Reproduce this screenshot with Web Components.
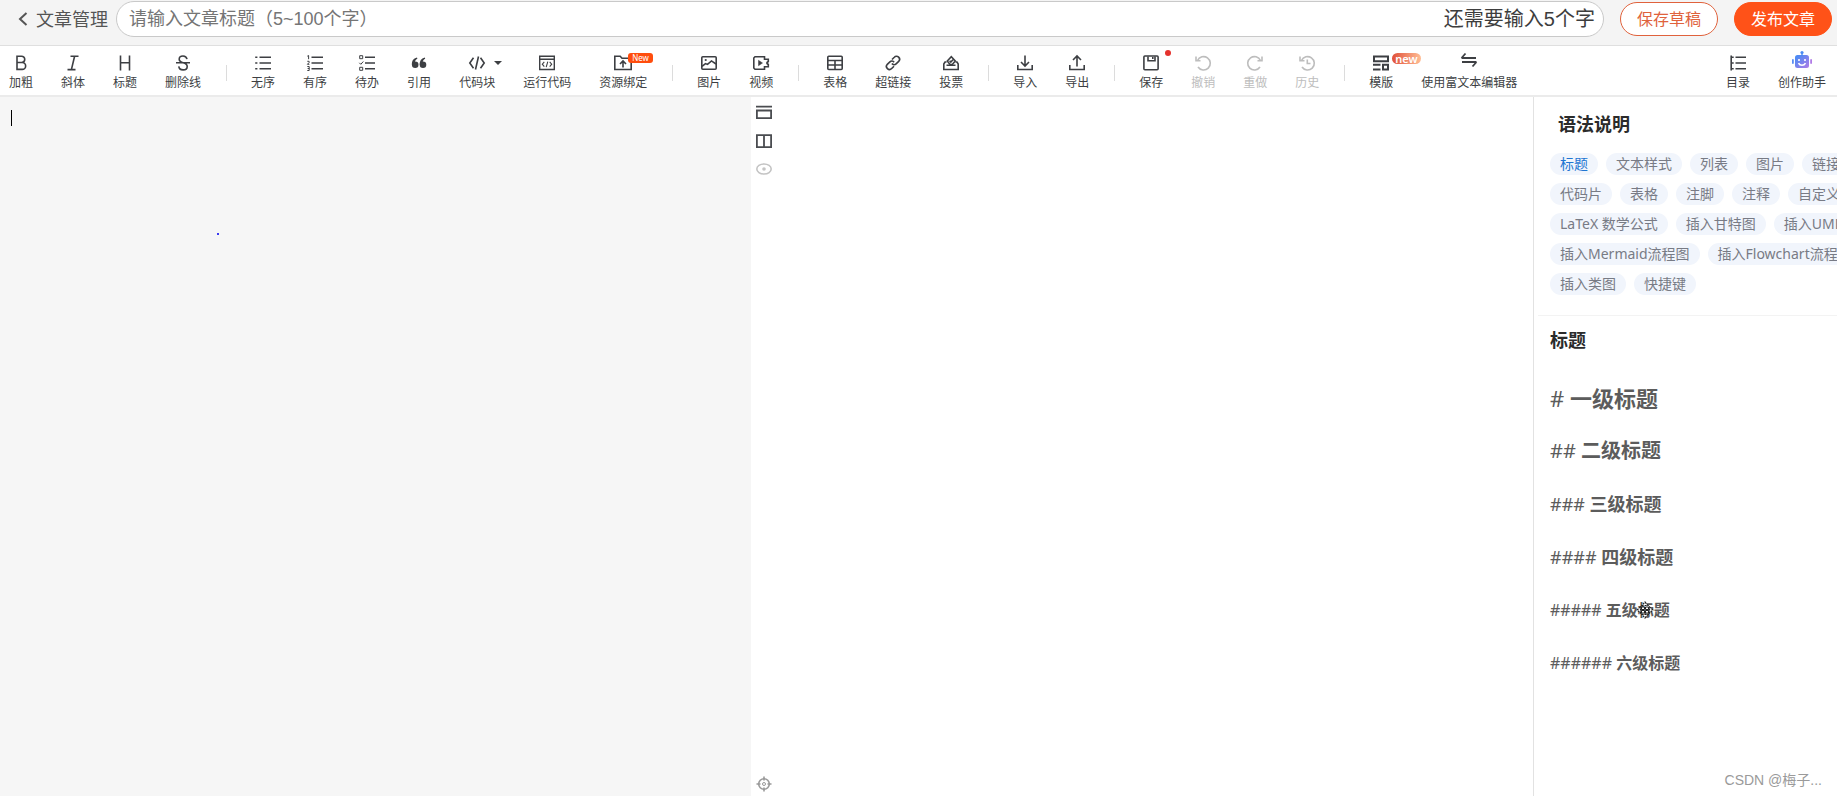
<!DOCTYPE html>
<html lang="zh-CN">
<head>
<meta charset="utf-8">
<title>文章管理</title>
<style>
  html, body { height: 100%; margin: 0; }
  body { font-family: "Noto Sans", "Noto Sans CJK SC", sans-serif; color: #333; background: #fff; overflow: hidden; }
</style>
</head>
<body>
<editor-app></editor-app>
<script>
const define = (name, html, setup) => {
  const template = document.createElement('template');
  template.innerHTML = html;
  customElements.define(name, class extends HTMLElement {
    constructor() {
      super();
      this.attachShadow({ mode: 'open' }).append(template.content.cloneNode(true));
    }
    connectedCallback() { if (setup) setup(this, this.shadowRoot); }
  });
};

const ICONS = {
  bold: '<path d="M4 1.2h4.6a3.1 3.1 0 0 1 0 6.3H4zM4 7.5h5.2a3.4 3.4 0 0 1 0 6.9H4z"/>',
  italic: '<path d="M5.5 1.2h8M2.5 14.6h8M9.6 1.2L6.4 14.6"/>',
  heading: '<path d="M3.5 .5v15M12.5 .5v15M3.5 7.8h9"/>',
  strike: '<path d="M12 4.2C11.6 2.2 10.200 1 8 1 5.600 1 4.200 2.300 4.200 4.200c0 2 1.800 2.900 4 3.500 2.400.6 4 1.600 4 3.700 0 2.100-1.700 3.500-4.100 3.500-2.500 0-4.100-1.300-4.300-3.500M1 7.800h14"/>',
  ul: '<path d="M4.500 2.200H16M4.500 8H16M4.500 13.800H16M.2 2.200h2.200M.2 8h2.200M.2 13.800h2.200"/>',
  ol: '<path d="M4.500 2.200H16M4.500 8H16M4.500 13.800H16"/><path stroke-width="1" d="M.3 1.200L1.600.5v3.700M.3 6.300h1.800v1.300L.4 9.300h2M.3 11.500h1.900v4H.3M.6 13.500h1.600"/>',
  todo: '<path d="M6 2.200H16M6 8H16M6 13.800H16"/><path stroke-width="1" d="M.7.7h3v3h-3zM.7 12.300h3v3h-3zM.3 7.800l1.500 1.500L4.300 6.500"/>',
  quote: '<g fill="currentColor" stroke="none"><circle cx="4.200" cy="9.800" r="3.300"/><path d="M.9 9.800C.7 6 2.300 3.500 6 2.500l.4 1.300C4.500 4.700 3.900 6 4 7.500z"/><circle cx="12" cy="9.800" r="3.300"/><path d="M8.700 9.800C8.500 6 10.100 3.500 13.800 2.500l.4 1.300c-1.900.9-2.500 2.200-2.400 3.700z"/></g>',
  code: '<path d="M4.500 2.800L.8 8l3.700 5.200M11.500 2.800L15.200 8l-3.700 5.200M9.500 1.500l-3 13"/>',
  run: '<path stroke-width="1.400" d="M.7 1.200h14.600v13.300H.7zM.7 4.300h14.600"/><path stroke-width="1.100" d="M5.300 6.800L3.300 9.200l2 2.400M10.700 6.800l2 2.400-2 2.400M8.800 6.600l-1.600 5.600"/>',
  folder: '<path d="M-.2 1.300h5.400L7 3.200h9.200v11.300H-.2z"/><path d="M8 12.500V6.300M5 9l3-3 3 3"/>',
  image: '<rect x=".8" y="1.800" width="14.400" height="12.400" rx="1"/><path d="M1 11.300l3.500-2.700 2 .8 4-3.500 4.500 3.100"/><path stroke-width="1.800" d="M3.800 5h1.800"/>',
  video: '<path d="M2 1.800h9.500v2.500h3.800v2.200L14 7.500v1l1.300 1v2.200h-3.800v2.500H2L.8 13V3z"/><path d="M5.500 5.300l4 2.700-4 2.700z" fill="currentColor" stroke-width=".5"/>',
  table: '<rect x=".8" y="1.200" width="14.400" height="13.300" rx="1"/><path d="M.8 5.500h14.400M.8 10h14.400M8 5.500v9"/>',
  link: '<path d="M7 4.500l2.300-2.300a3 3 0 0 1 4.400 4.200l-2.600 2.500c-1.300 1.200-3.200 1-4.200-.4M9 11.200l-2.300 2.300a3 3 0 0 1-4.400-4.200l2.600-2.500c1.300-1.200 3.200-1 4.200.4"/>',
  vote: '<path d="M3.500 7H2l-1.200 2v5.500h14.400V9L14 7h-1.500M3.500 10.300h9"/><path d="M4.300 6l4-4.300 4 4.300-3 3.500H7zM6.600 5.800l1.200 1.200L10 4.800"/>',
  import: '<path d="M8 .5v10M4 7l4 4 4-4M.8 10v4.500h14.400V10"/>',
  export: '<path d="M8 11.500V1.200M4 5l4-4 4 4M.8 10v4.500h14.400V10"/>',
  save: '<rect x=".9" y="1" width="14.200" height="13.800" rx="1"/><path d="M5 1.500V5.700h7V1.500"/><path d="M9.800 2v2"/>',
  undo: '<path d="M2.500 5.500A6.700 6.700 0 1 1 3 12M1 1.500v4.300h4.500"/>',
  redo: '<path d="M13.500 5.500A6.700 6.700 0 1 0 13 12M15 1.500v4.300h-4.500"/>',
  history: '<path d="M2.500 5.500A6.700 6.700 0 1 1 3 12M1 1.500v4.300h4.500M8.300 4.500V8.500h3.200"/>',
  template: '<path stroke-width="2" d="M1 1.500h14v4.800H1zM10 9.800h5v4.700h-5zM0 9.800h7.500M0 14.500h7.500"/>',
  swap: '<path stroke-width="1.800" d="M.5 3H15M.5 3L4.500-1.500M1 7h14.500M15.500 7l-4 4.500"/>',
  toc: '<path d="M5.500 2.200H16M5.500 8H16M5.500 13.800H16M1.200.5v15M1.200 2.200h2.500M1.200 8h2.500M1.200 13.800h2.500"/>',
  robot: '<defs><linearGradient id="g" x1="0" y1="0" x2="1" y2="1"><stop offset="0" stop-color="#3f8cf5"/><stop offset="1" stop-color="#b07be6"/></linearGradient></defs><g stroke="none"><rect x="1" y="0" width="14" height="13" rx="2.500" fill="url(#g)"/><rect x="-2" y="4" width="1.800" height="5" rx=".9" fill="#5a8df2"/><rect x="16.200" y="4" width="1.800" height="5" rx=".9" fill="#b07be6"/><circle cx="8" cy="-2.500" r="1.600" fill="#4a8cf4"/><rect x="7.300" y="-2" width="1.400" height="3" fill="#4a8cf4"/></g><path stroke="#fff" stroke-width="1.600" d="M5 4v2M11 4v2M4.500 8.200c1.500 2.800 5.500 2.800 7 0"/>',
  single: '<path stroke-width="1.800" d="M0 1.700h16M.9 5.500h14.200v7.700H.9z"/>',
  split: '<path stroke-width="1.800" d="M.9 2.200h14.200v12H.9zM8 2.200v12"/>',
  eye: '<ellipse cx="8" cy="8" rx="7.200" ry="5"/><circle cx="8" cy="8" r="1.800" fill="currentColor" stroke="none"/>',
  target: '<circle cx="8" cy="8" r="5.300"/><circle cx="8" cy="8" r="1.500" stroke-width="1"/><path d="M8 .5v4M8 11.500v4M.5 8h4M11.500 8h4"/>',
  back: '<path stroke-width="2" d="M11.500 2L5 8l6.500 6"/>'
};

define('line-icon', `
  <style>
    :host { display: block; width: 16px; height: 16px; }
    svg { display: block; width: 100%; height: 100%; overflow: visible; fill: none; stroke: currentColor; stroke-width: 1.6; }
  </style>
  <svg viewBox="0 0 16 16" aria-hidden="true"></svg>`,
  (el, root) => { root.querySelector('svg').innerHTML = ICONS[el.getAttribute('name')]; });

define('tool-button', `
  <style>
    :host { display: block; flex: none; color: #3d3f43; }
    :host([muted]) { color: #bdbdbd; }
    button { position: relative; display: flex; flex-direction: column; align-items: center; gap: 4px;
      padding: 0; border: 0; background: none; color: inherit; font: 12px/16px "Noto Sans", "Noto Sans CJK SC", sans-serif; white-space: nowrap; cursor: pointer; }
  </style>
  <button type="button"><span><slot></slot></span><slot name="mark"></slot></button>`,
  (el, root) => {
    const button = root.querySelector('button');
    const icon = document.createElement('line-icon');
    icon.setAttribute('name', el.getAttribute('icon'));
    button.prepend(icon);
    button.disabled = el.hasAttribute('muted');
  });

define('tool-mark', `
  <style>
    :host { position: absolute; display: block; left: 50%; color: #fff; }
    :host([kind="new"]) { top: -2px; margin-left: 5px; padding: 0 4px; border-radius: 3px; background: #ff4d0d; font-size: 8px; line-height: 10px; }
    :host([kind="glow"]) { top: -2px; margin-left: 11px; padding: 0 3px; border-radius: 6px; background: linear-gradient(90deg, #e0503a, #ffbd94); font-size: 11px; line-height: 11px; font-weight: 600; }
    :host([kind="dot"]) { top: -5px; margin-left: 14px; width: 6px; height: 6px; border-radius: 50%; background: #e5322d; }
    :host([kind="caret"]) { top: 6px; margin-left: 17px; border: 4px solid transparent; border-top-color: #3d3f43; border-bottom: 0; }
  </style><slot></slot>`);

define('tool-group', `
  <style>
    :host { display: flex; flex: none; align-items: center; gap: 28px; }
    :host([divided])::before { content: ""; width: 1px; height: 16px; margin: 0 -4px 0 25px; background: #dcdcdc; }
  </style><slot></slot>`);

define('tool-bar', `
  <style>
    :host { display: flex; align-items: center; height: 52px; padding: 4px 11px 0 9px; box-sizing: border-box; background: #fff; border-top: 1px solid #dfdfdf; border-bottom: 2px solid #ebebeb; }
    .space { flex: 1; }
  </style>
  <tool-group>
    <tool-button icon="bold">加粗</tool-button><tool-button icon="italic">斜体</tool-button>
    <tool-button icon="heading">标题</tool-button><tool-button icon="strike">删除线</tool-button>
  </tool-group>
  <tool-group divided>
    <tool-button icon="ul">无序</tool-button><tool-button icon="ol">有序</tool-button>
    <tool-button icon="todo">待办</tool-button><tool-button icon="quote">引用</tool-button>
    <tool-button icon="code">代码块<tool-mark slot="mark" kind="caret"></tool-mark></tool-button>
    <tool-button icon="run">运行代码</tool-button>
    <tool-button icon="folder">资源绑定<tool-mark slot="mark" kind="new">New</tool-mark></tool-button>
  </tool-group>
  <tool-group divided>
    <tool-button icon="image">图片</tool-button><tool-button icon="video">视频</tool-button>
  </tool-group>
  <tool-group divided>
    <tool-button icon="table">表格</tool-button><tool-button icon="link">超链接</tool-button><tool-button icon="vote">投票</tool-button>
  </tool-group>
  <tool-group divided>
    <tool-button icon="import">导入</tool-button><tool-button icon="export">导出</tool-button>
  </tool-group>
  <tool-group divided>
    <tool-button icon="save">保存<tool-mark slot="mark" kind="dot"></tool-mark></tool-button>
    <tool-button icon="undo" muted>撤销</tool-button><tool-button icon="redo" muted>重做</tool-button><tool-button icon="history" muted>历史</tool-button>
  </tool-group>
  <tool-group divided>
    <tool-button icon="template">模版<tool-mark slot="mark" kind="glow">new</tool-mark></tool-button>
    <tool-button icon="swap">使用富文本编辑器</tool-button>
  </tool-group>
  <div class="space"></div>
  <tool-group>
    <tool-button icon="toc">目录</tool-button><tool-button icon="robot">创作助手</tool-button>
  </tool-group>`);

define('title-bar', `
  <style>
    :host { display: flex; align-items: flex-start; height: 45px; padding: 1px 5px 0 15px; box-sizing: border-box; background: #f4f4f4; }
    a { display: flex; align-items: center; gap: 5px; height: 36px; margin-right: 8px; color: #555; font-size: 18px; line-height: 24px; text-decoration: none; white-space: nowrap; }
    .field { flex: 1; display: flex; align-items: center; height: 36px; box-sizing: border-box; padding: 0 8px 0 12px; border: 1px solid #c9c9c9; border-radius: 18px; background: #fff; }
    input { flex: 1; min-width: 0; padding: 0; border: 0; outline: 0; background: none; font: 18px/24px "Liberation Sans", "Noto Sans CJK SC", sans-serif; color: #333; }
    input::placeholder { color: #757575; opacity: 1; }
    .hint { font: 20px/28px "Liberation Sans", "Noto Sans CJK SC", sans-serif; color: #3d3d3d; white-space: nowrap; }
    button { height: 34px; margin: 1px 0 0 16px; padding: 0 16px; border: 1px solid #e0623c; border-radius: 17px; background: #fff; color: #e0623c; font: 16px/24px "Noto Sans", "Noto Sans CJK SC", sans-serif; white-space: nowrap; }
    .primary { background: #ff5218; border-color: #ff5218; color: #fff; }
  </style>
  <a href="#"><line-icon name="back"></line-icon><span>文章管理</span></a>
  <div class="field"><input type="text" aria-label="文章标题" placeholder="请输入文章标题（5~100个字）"><span class="hint">还需要输入5个字</span></div>
  <button type="button">保存草稿</button>
  <button type="button" class="primary">发布文章</button>`);

define('source-pane', `
  <style>
    :host { position: relative; display: flex; flex: 1; min-width: 0; background: #f6f6f6; }
    textarea { flex: 1; padding: 8px 12px; border: 0; outline: 0; resize: none; background: none; font: 16px/24px "Noto Sans", "Noto Sans CJK SC", sans-serif; }
    .caret { position: absolute; left: 11px; top: 13px; width: 1px; height: 16px; background: #000; }
    .speck { position: absolute; left: 217px; top: 136px; width: 2px; height: 2px; background: #3a3af0; }
  </style>
  <textarea aria-label="正文"></textarea><i class="caret"></i><i class="speck"></i>`);

define('view-rail', `
  <style>
    :host { display: flex; flex-direction: column; flex: none; align-items: center; gap: 12px; width: 26px; margin-right: 6px; padding: 8px 0 4px; box-sizing: border-box; color: #4a4c50; }
    button { padding: 0; border: 0; background: none; color: inherit; }
    .off { color: #c4c4c4; }
    .locate { margin-top: auto; color: #999; }
  </style>
  <button type="button" aria-label="单栏"><line-icon name="single"></line-icon></button>
  <button type="button" aria-label="双栏"><line-icon name="split"></line-icon></button>
  <button type="button" aria-label="预览" class="off"><line-icon name="eye"></line-icon></button>
  <button type="button" aria-label="定位" class="locate"><line-icon name="target"></line-icon></button>`);

define('syntax-tag', `
  <style>
    :host { display: block; }
    a { display: block; padding: 0 10px; border-radius: 11px; background: #f1f5fc; color: #787b85; font-size: 14px; line-height: 22px; text-decoration: none; white-space: nowrap; }
    :host([current]) a { color: #1f76d2; }
  </style><a href="#"><slot></slot></a>`);

define('heading-sample', `
  <style>
    :host { display: flex; align-items: center; height: 53px; color: #5c5c5c; white-space: pre; }
    :host([size="22"]) { font-size: 22px; } :host([size="20"]) { font-size: 20px; }
    :host([size="18"]) { font-size: 18px; } :host([size="16"]) { font-size: 16px; }
    div { position: relative; line-height: 28px; }
    b { font-weight: 700; }
  </style><div><span></span><b><slot></slot></b><slot name="pointer"></slot></div>`,
  (el, root) => { root.querySelector('span').textContent = '#'.repeat(+el.getAttribute('level')) + ' '; });

define('syntax-panel', `
  <style>
    :host { display: flex; flex-direction: column; flex: none; width: 304px; box-sizing: border-box; border-left: 1px solid #e2e2e2; overflow: hidden; }
    h2, h3 { margin: 0; font-size: 18px; line-height: 24px; color: #2b2b2b; font-weight: 700; }
    h2 { padding: 15px 24px 17px; }
    nav { display: flex; flex-wrap: wrap; gap: 8px; width: 340px; margin-left: 16px; }
    .body { margin: 20px 0 0 4px; padding: 12px 0 0 12px; border-top: 1px solid #f3f3f3; }
    .list { margin-top: 19px; }
    ::slotted(svg), svg { position: absolute; }
    footer { margin-top: auto; padding: 0 15px 6px 0; text-align: right; color: #9a9a9a; font: 14px/20px "Liberation Sans", "Noto Sans CJK SC", sans-serif; }
    svg { left: 86px; top: 5px; width: 18px; height: 18px; }
  </style>
  <h2>语法说明</h2>
  <nav>
    <syntax-tag current>标题</syntax-tag><syntax-tag>文本样式</syntax-tag><syntax-tag>列表</syntax-tag><syntax-tag>图片</syntax-tag><syntax-tag>链接</syntax-tag>
    <syntax-tag>代码片</syntax-tag><syntax-tag>表格</syntax-tag><syntax-tag>注脚</syntax-tag><syntax-tag>注释</syntax-tag><syntax-tag>自定义列表</syntax-tag>
    <syntax-tag>LaTeX 数学公式</syntax-tag><syntax-tag>插入甘特图</syntax-tag><syntax-tag>插入UML图</syntax-tag>
    <syntax-tag>插入Mermaid流程图</syntax-tag><syntax-tag>插入Flowchart流程图</syntax-tag>
    <syntax-tag>插入类图</syntax-tag><syntax-tag>快捷键</syntax-tag>
  </nav>
  <section class="body">
    <h3>标题</h3>
    <div class="list">
      <heading-sample level="1" size="22">一级标题</heading-sample>
      <heading-sample level="2" size="20">二级标题</heading-sample>
      <heading-sample level="3" size="18">三级标题</heading-sample>
      <heading-sample level="4" size="18">四级标题</heading-sample>
      <heading-sample level="5" size="16">五级标题<svg slot="pointer" viewBox="0 0 18 18" aria-hidden="true"><path d="M9 1l3 3.500H6zM9 17l3-3.500H6zM1 9l3.500-3v6zM17 9l-3.500-3v6z" fill="#fff" stroke="#222" stroke-width="1.200" stroke-dasharray="2 1"/><path d="M5.500 6h3v2.500h-3zM9.500 6h3v2.500h-3zM5.500 9.500h3V12h-3zM9.500 9.500h3V12h-3z" fill="#fff" stroke="#222"/></svg></heading-sample>
      <heading-sample level="6" size="16">六级标题</heading-sample>
    </div>
  </section>
  <footer>CSDN @梅子...</footer>`);

define('preview-pane', `<style>:host { display: block; flex: 1; min-width: 0; background: #fff; }</style><slot></slot>`);

define('editor-app', `
  <style>
    :host { display: flex; flex-direction: column; height: 100vh; }
    title-bar, tool-bar { flex: none; }
    main { flex: 1; display: flex; min-height: 0; }
  </style>
  <title-bar></title-bar>
  <tool-bar></tool-bar>
  <main><source-pane></source-pane><view-rail></view-rail><preview-pane></preview-pane><syntax-panel></syntax-panel></main>`);
</script>
</body>
</html>
